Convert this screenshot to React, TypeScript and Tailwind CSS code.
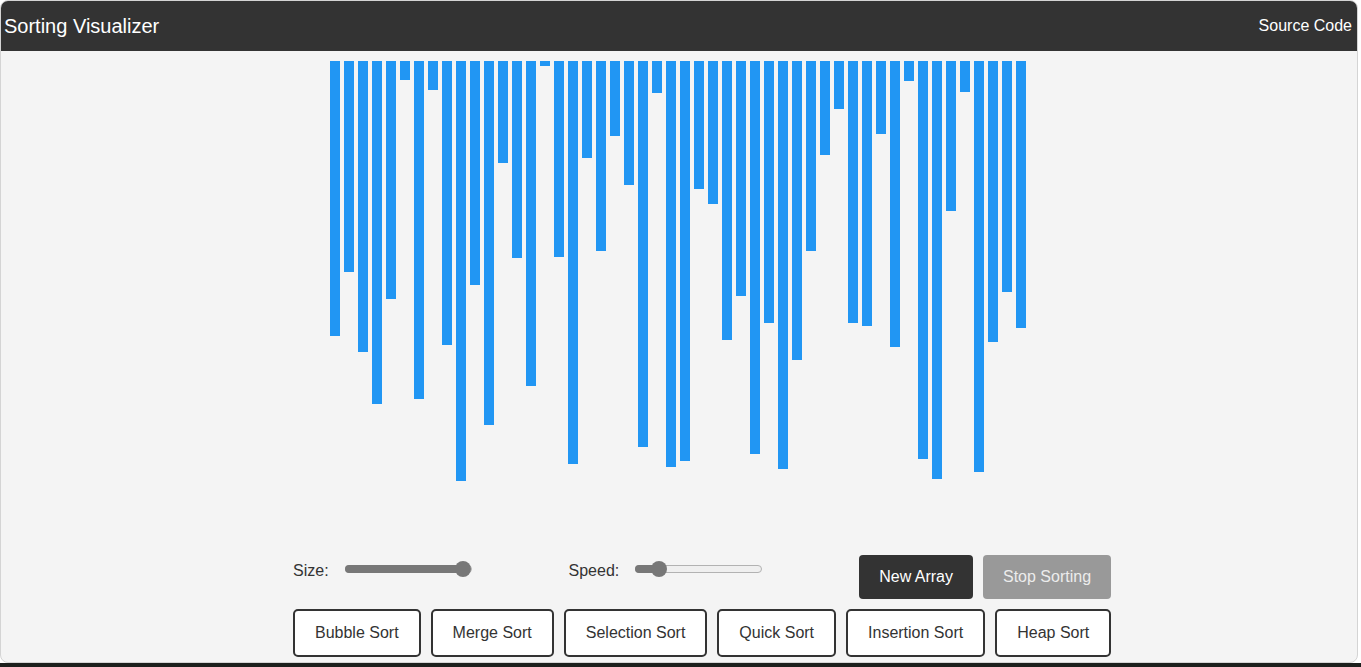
const bars = [
  336, 272, 352, 404, 299, 80, 399, 90, 345, 481, 285, 425, 163, 258, 386, 66, 257, 464, 158, 251, 136, 185, 447, 93, 467,
  461, 189, 204, 340, 296, 454, 323, 469, 360, 251, 155, 109, 323, 326, 134, 347, 81, 459, 479, 211, 92, 472, 342, 292, 328,
].map((end) => end - 61)

const algorithms = ['Bubble Sort', 'Merge Sort', 'Selection Sort', 'Quick Sort', 'Insertion Sort', 'Heap Sort']

function Slider({ label, percent }: { label: string; percent: number }) {
  return (
    <div className="flex h-[18px] items-center gap-4">
      <span className="pt-[3px] text-base text-[#333]">{label}</span>
      <div className="relative h-2 w-[127px] rounded-full border border-[#b2b2b2] bg-[#efefef]">
        <div className="absolute -left-px -top-px h-2 rounded-full bg-[#777]" style={{ width: `${percent}%` }} />
        <div
          className="absolute top-1/2 h-4 w-4 -translate-x-1/2 -translate-y-1/2 rounded-full bg-[#777]"
          style={{ left: `${percent}%` }}
        />
      </div>
    </div>
  )
}

export default function App() {
  return (
    <div className="flex h-[667px] w-[1361px] flex-col overflow-hidden bg-white font-['Liberation_Sans',Arial,sans-serif]">
      <div className="flex h-[663px] w-[1358px] flex-col overflow-hidden rounded-lg border border-[#d4d4d4] bg-[#f4f4f4]">
        <header className="flex h-[50px] shrink-0 items-center justify-between bg-[#333] pl-[3px] pr-[5px] text-white">
          <h1 className="text-[20px] leading-none">Sorting Visualizer</h1>
          <a className="text-base leading-none">Source Code</a>
        </header>

        <div className="mt-[10px] flex h-[494px] items-start justify-center pr-[2px]">
          {bars.map((h, i) => (
            <div key={i} className="mx-[2px] w-[10px] bg-[#2196f3]" style={{ height: h }} />
          ))}
        </div>

        <div className="ml-[292px] flex w-[818px] flex-col gap-[10px]">
          <div className="flex items-start justify-between">
            <div className="mt-[5px]">
              <Slider label="Size:" percent={94} />
            </div>
            <div className="mt-[5px]">
              <Slider label="Speed:" percent={18} />
            </div>
            <div className="flex gap-[10px]">
              <button className="h-[44px] whitespace-nowrap rounded bg-[#333] px-5 text-base text-white">New Array</button>
              <button className="h-[44px] w-[128px] whitespace-nowrap rounded bg-[#999] text-base text-[#ececec]">
                Stop Sorting
              </button>
            </div>
          </div>
          <div className="flex gap-[10px]">
            {algorithms.map((name) => (
              <button
                key={name}
                className="h-[48px] shrink-0 whitespace-nowrap rounded-[5px] border-2 border-[#333] bg-white px-5 text-base text-[#333]"
              >
                {name}
              </button>
            ))}
          </div>
        </div>
      </div>
      <div className="h-[4px] bg-[#1c1f1c]" />
    </div>
  )
}
